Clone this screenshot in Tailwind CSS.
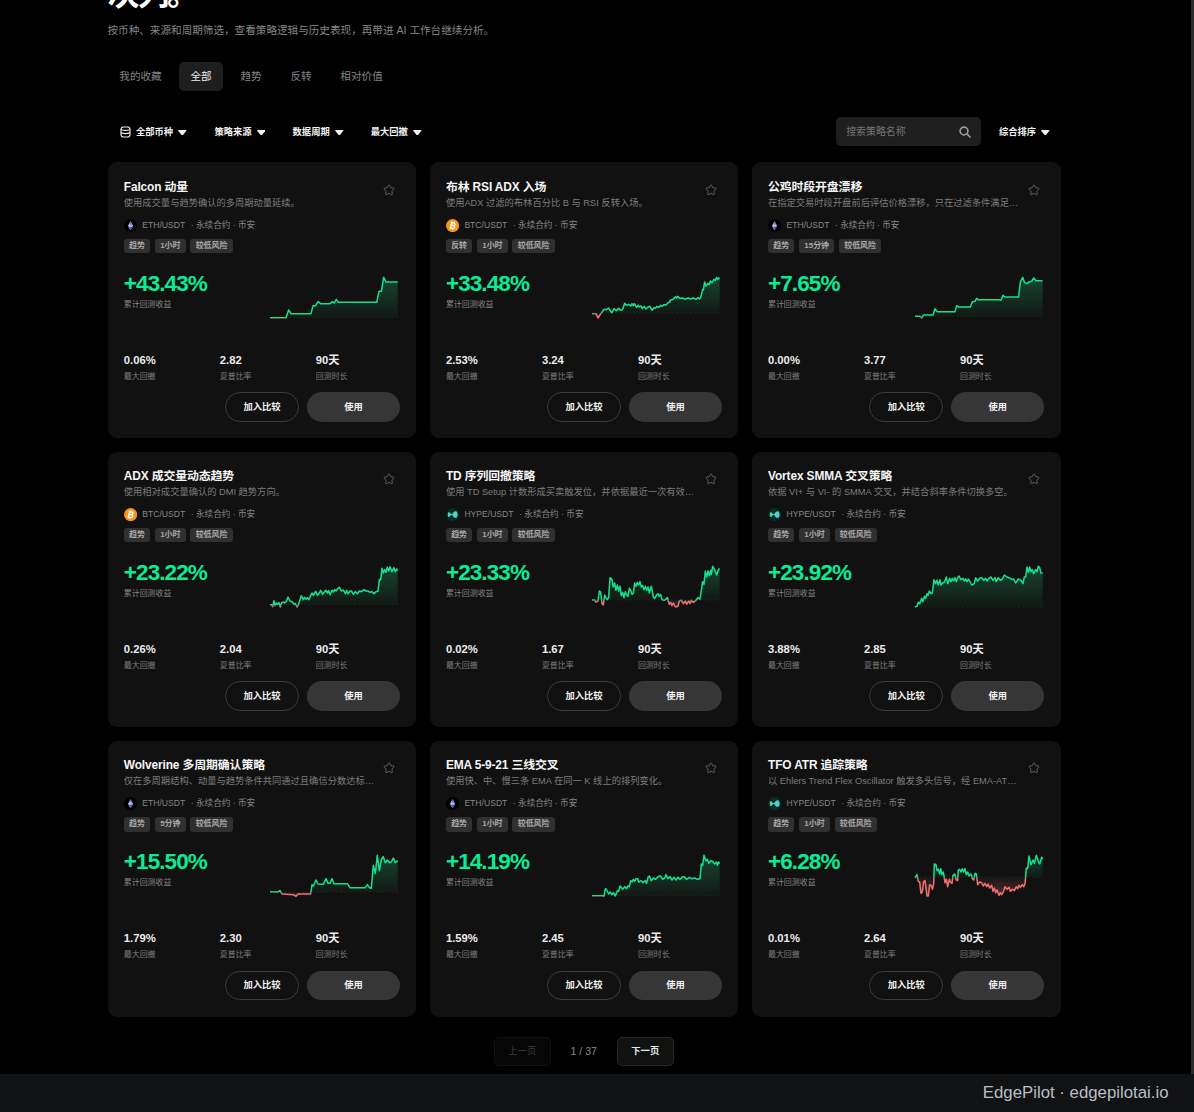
<!DOCTYPE html>
<html lang="zh-CN">
<head>
    <meta charset="UTF-8">
    <meta name="viewport" content="width=device-width, initial-scale=1.0">
    <title>EdgePilot 策略</title>
    <script src="https://cdn.jsdelivr.net/npm/@tailwindcss/browser@4"></script>
</head>
<body class="bg-black text-white font-['Liberation_Sans','Noto_Sans_CJK_SC',sans-serif] h-[1112px] overflow-hidden flex flex-col">
    <div class="flex h-[1074px] overflow-hidden">
        <main class="flex-1 pl-[107.5px] pr-[130.5px]">
            <div class="h-[12px] flex flex-col justify-end">
                <h1 class="text-[32px] leading-[36px] font-bold tracking-[-0.07em]">次列。</h1>
            </div>
            <p class="mt-[9.8px] text-[10.6px] leading-[17px] text-[#858585]">按币种、来源和周期筛选，查看策略逻辑与历史表现，再带进 AI 工作台继续分析。</p>

            <nav class="mt-[23.2px] flex gap-[5.2px] text-[10.6px] leading-[29px] text-[#858585]">
                <button class="px-[11.8px] rounded-[5px]">我的收藏</button>
                <button class="px-[11.8px] rounded-[5px] bg-[#1e1e1e] text-[#f0f0f0]">全部</button>
                <button class="px-[11.8px] rounded-[5px]">趋势</button>
                <button class="px-[11.8px] rounded-[5px]">反转</button>
                <button class="px-[11.8px] rounded-[5px]">相对价值</button>
            </nav>

            <div class="mt-[26.5px] h-[29px] flex items-center text-[9.27px] font-bold text-[#f2f2f2]">
                <button class="pt-px pl-3 w-[95.5px] flex items-center">
                    <svg class="w-[11px] h-[12px] mr-[5.5px]" viewBox="0 0 11 12" fill="none" stroke="currentColor" stroke-width="1.1">
                        <rect x="1" y="1" width="9" height="10" rx="2.4"></rect>
                        <path d="M1 3.2c1 1.6 8 1.6 9 0M1 6.4c1 1.6 8 1.6 9 0"></path>
                    </svg>
                    全部币种
                    <svg class="w-[8.6px] h-[5.4px] ml-[5.3px]" viewBox="0 0 86 54" fill="currentColor"><path d="M8 0h70q10 2 4 11L50 49q-7 7-14 0L4 11Q-2 2 8 0z"></path></svg>
                </button>
                <button class="pt-px pl-[11.5px] w-[78.1px] flex items-center">
                    策略来源
                    <svg class="w-[8.6px] h-[5.4px] ml-[5.3px]" viewBox="0 0 86 54" fill="currentColor"><path d="M8 0h70q10 2 4 11L50 49q-7 7-14 0L4 11Q-2 2 8 0z"></path></svg>
                </button>
                <button class="pt-px pl-[11.5px] w-[78.1px] flex items-center">
                    数据周期
                    <svg class="w-[8.6px] h-[5.4px] ml-[5.3px]" viewBox="0 0 86 54" fill="currentColor"><path d="M8 0h70q10 2 4 11L50 49q-7 7-14 0L4 11Q-2 2 8 0z"></path></svg>
                </button>
                <button class="pt-px pl-[11.5px] w-[78.1px] flex items-center">
                    最大回撤
                    <svg class="w-[8.6px] h-[5.4px] ml-[5.3px]" viewBox="0 0 86 54" fill="currentColor"><path d="M8 0h70q10 2 4 11L50 49q-7 7-14 0L4 11Q-2 2 8 0z"></path></svg>
                </button>
                <div class="ml-auto w-[145.6px] h-[29px] rounded-[5px] bg-[#1e1e1e] flex items-center justify-between pl-[10.4px] pr-[10px] text-[9.94px] font-normal text-[#757575]">
                    <span>搜索策略名称</span>
                    <svg class="w-[12px] h-[12px]" viewBox="0 0 12 12" fill="none" stroke="#9a9a9a" stroke-width="1.7" stroke-linecap="round"><circle cx="5" cy="5" r="3.9"></circle><path d="M8 8l3 3"></path></svg>
                </div>
                <button class="pt-px pl-[17.7px] pr-[10.5px] flex items-center">
                    综合排序
                    <svg class="w-[8.6px] h-[5.4px] ml-[5.3px]" viewBox="0 0 86 54" fill="currentColor"><path d="M8 0h70q10 2 4 11L50 49q-7 7-14 0L4 11Q-2 2 8 0z"></path></svg>
                </button>
            </div>

            <div id="cards" class="mt-[15.9px] grid grid-cols-3 gap-x-[13.3px] gap-y-[13.4px]"></div>

            <div class="mt-[20.8px] flex justify-center items-center text-[9.27px] font-bold pr-[0.5px]">
                <button class="w-[57px] h-[28.5px] rounded-[5px] border border-[#101110] bg-[#060606] text-[#3c3c3c] font-normal">上一页</button>
                <span class="w-[66px] text-center text-[10.6px] font-normal text-[#8a8a8a]">1 / 37</span>
                <button class="w-[57px] h-[28.5px] rounded-[5px] border border-[#252a26] bg-[#101210] text-[#e8e8e8]">下一页</button>
            </div>
        </main>
        <div class="w-[3px] bg-[#2c2c2c]"></div>
    </div>
    <footer class="h-[38px] bg-[#111214] flex items-center justify-end pr-[25.5px] text-[16.8px] text-[#b9bfc6]">EdgePilot · edgepilotai.io</footer>

    <script>
        const coinIcons = {
            ETH: `<svg class="w-[13.2px] h-[13.2px]" viewBox="0 0 40 40"><circle cx="20" cy="20" r="20" fill="#000"></circle><path d="M20 6L12 21l8 5z" fill="#9cc4f5"></path><path d="M20 6l8 15-8 5z" fill="#8f88f0"></path><path d="M12 22.5l8 11.5v-7z" fill="#b79cf5"></path><path d="M28 22.5l-8 11.5v-7z" fill="#6e69d0"></path><path d="M20 16l-8 5 8 5 8-5z" fill="#d5deff" opacity=".5"></path></svg>`,
            BTC: `<svg class="w-[13.2px] h-[13.2px]" viewBox="0 0 40 40"><circle cx="20" cy="20" r="20" fill="#f7931a"></circle><g transform="rotate(14 20 20)" fill="none" stroke="#fff" stroke-width="4"><path d="M12 11.5h10.5a4 4 0 0 1 0 8H15.5M22.5 19.5a4.5 4.5 0 0 1 0 9H12M15.5 11.5v17"></path><path d="M17.5 7.5v4M22 7.5v4M17.5 28.5v4M22 28.5v4" stroke-width="2.6"></path></g></svg>`,
            HYPE: `<svg class="w-[13.2px] h-[13.2px]" viewBox="0 0 40 40"><circle cx="20" cy="20" r="20" fill="#072b26"></circle><path d="M6.5 13.500c3-1.500 5.500 1 7.500 4 1.500 1.500 4.500 1.500 6 0 2-4.500 6-8.500 12-7 4.500 4.500 4.500 14.500 0 19-6 1.500-10-2.500-12-7-1.500-1.500-4.500-1.500-6 0-2 3-4.500 5.500-7.500 4-1.500-3-1.500-10 0-13z" fill="#50d2c1"></path></svg>`
        };

        // points live on a 384x130 grid, base is the zero-return line
        const strategies = [
            { name: 'Falcon 动量', desc: '使用成交量与趋势确认的多周期动量延续。', coin: 'ETH', tags: ['趋势', '1小时'], ret: '+43.43%', dd: '0.06%', sharpe: '2.82', base: 125,
              points: '0,125 48,125 56,102 63,113 123,113 129,89 137,89 144,77 152,83 180,83 187,77 193,81 199,70 205,79 320,79 327,46 334,46 341,4 348,18 383,18' },
            { name: '布林 RSI ADX 入场', desc: '使用ADX 过滤的布林百分比 B 与 RSI 反转入场。', coin: 'BTC', tags: ['反转', '1小时'], ret: '+33.48%', dd: '2.53%', sharpe: '3.24', base: 111,
              points: '0,113 12,113 18,126 25,115 36,100 43,101 50,96 56,106 60,110 66,98 73,104 80,97 86,103 92,100 98,82 104,88 110,85 116,90 120,83 124,89 127,83 134,94 138,88 142,93 147,90 151,98 156,91 162,99 168,93 174,91 180,103 186,95 190,97 195,91 200,94 206,88 210,91 216,86 222,87 228,80 232,79 236,72 244,70 250,62 254,66 257,61 264,67 272,66 280,70 288,66 296,69 304,66 312,70 318,65 322,69 326,65 332,40 334,42 338,18 342,30 348,22 352,26 355,15 360,20 366,10 370,13 374,4 377,10 380,6 383,8' },
            { name: '公鸡时段开盘漂移', desc: '在指定交易时段开盘前后评估价格漂移，只在过滤条件满足时触发。', coin: 'ETH', tags: ['趋势', '15分钟'], ret: '+7.65%', dd: '0.00%', sharpe: '3.77', base: 121,
              points: '0,121 14,121 20,126 26,117 54,117 60,98 66,107 120,107 125,89 131,93 166,93 172,77 180,76 185,67 190,71 250,71 258,73 264,58 270,63 311,63 316,18 323,4 329,20 336,23 343,17 350,16 356,6 363,14 383,14' },
            { name: 'ADX 成交量动态趋势', desc: '使用相对成交量确认的 DMI 趋势方向。', coin: 'BTC', tags: ['趋势', '1小时'], ret: '+23.22%', dd: '0.26%', sharpe: '2.04', base: 119,
              points: '0,119 5,119 8,125 12,107 15,122 19,114 23,118 27,113 31,126 35,113 40,111 44,114 50,107 54,96 60,108 66,110 72,118 76,116 81,126 86,118 88,110 94,92 100,104 104,97 108,103 112,98 117,104 121,94 126,84 130,91 134,84 137,79 143,91 148,84 152,76 158,88 164,80 168,76 172,84 176,77 180,89 186,76 190,81 194,74 198,78 203,71 208,67 214,78 220,75 226,86 230,76 234,86 240,78 244,78 250,88 256,80 262,86 268,78 274,80 282,74 288,78 294,78 300,82 306,80 312,86 318,80 324,78 328,44 332,44 336,10 340,24 344,14 348,22 352,6 356,18 360,5 366,20 372,8 376,20 380,12 383,17' },
            { name: 'TD 序列回撤策略', desc: '使用 TD Setup 计数形成买卖触发位，并依据最近一次有效信号执行。', coin: 'HYPE', tags: ['趋势', '1小时'], ret: '+23.33%', dd: '0.02%', sharpe: '1.67', base: 105,
              points: '0,105 8,105 12,111 18,108 22,78 26,82 30,116 34,120 38,90 42,98 46,104 50,98 54,38 60,44 64,66 68,54 72,76 76,60 80,78 84,64 88,92 92,82 96,98 100,80 104,90 108,94 112,70 116,76 120,88 124,84 128,54 132,64 136,52 140,60 144,50 148,66 152,62 156,74 160,64 164,76 168,66 172,84 178,64 184,96 188,100 194,90 198,86 202,94 206,88 210,104 218,106 226,98 232,118 236,112 240,122 244,114 250,126 258,124 262,108 268,106 274,116 280,108 284,118 290,108 294,116 298,106 304,112 312,106 318,98 324,102 328,76 332,50 336,58 340,18 344,36 348,18 352,32 356,16 358,28 362,4 368,14 374,30 380,12 383,13' },
            { name: 'Vortex SMMA 交叉策略', desc: '依据 VI+ 与 VI- 的 SMMA 交叉，并结合斜率条件切换多空。', coin: 'HYPE', tags: ['趋势', '1小时'], ret: '+23.92%', dd: '3.88%', sharpe: '2.85', base: 126,
              points: '0,126 6,124 10,112 14,116 20,100 24,110 28,94 32,100 36,86 39,91 43,78 48,86 52,84 57,44 62,56 66,46 70,60 75,44 78,60 83,54 88,52 94,36 98,56 104,40 108,50 112,40 116,48 120,38 124,50 128,38 132,33 138,44 144,40 148,48 152,42 156,50 160,42 164,48 170,60 178,56 182,38 188,48 194,40 200,38 206,46 212,40 216,48 222,40 228,36 234,46 240,38 244,50 250,38 256,46 262,42 268,30 276,36 286,40 292,44 296,42 302,54 310,42 318,46 324,56 328,36 332,36 336,6 340,22 344,6 348,20 352,14 356,26 362,14 366,20 370,4 374,8 378,24 383,24' },
            { name: 'Wolverine 多周期确认策略', desc: '仅在多周期结构、动量与趋势条件共同通过且确信分数达标时入场。', coin: 'ETH', tags: ['趋势', '5分钟'], ret: '+15.50%', dd: '1.79%', sharpe: '2.30', base: 114,
              points: '0,113 24,114 30,110 36,120 70,122 78,127 84,120 122,120 126,92 130,96 138,78 144,90 160,91 168,74 174,88 180,88 186,74 192,89 232,89 240,101 286,101 292,92 298,101 304,103 308,56 310,34 316,58 322,4 328,50 334,16 340,8 346,26 352,18 358,26 364,24 370,12 376,26 383,20' },
            { name: 'EMA 5-9-21 三线交叉', desc: '使用快、中、慢三条 EMA 在同一 K 线上的排列变化。', coin: 'ETH', tags: ['趋势', '1小时'], ret: '+14.19%', dd: '1.59%', sharpe: '2.45', base: 125,
              points: '0,125 30,125 36,127 40,104 44,108 50,120 54,114 60,122 64,116 70,126 76,110 80,112 84,96 92,106 98,98 104,104 108,96 112,98 116,80 120,84 124,76 128,82 132,74 137,74 140,84 148,80 153,86 160,80 164,88 168,70 172,66 178,80 184,72 190,76 196,70 202,66 206,66 212,76 218,72 222,62 228,74 234,68 240,78 246,70 252,78 258,70 264,76 272,68 276,68 284,76 292,70 300,74 308,72 316,76 324,74 328,30 332,34 336,4 342,20 346,16 350,28 356,20 362,22 368,30 374,24 376,34 380,24 383,29' },
            { name: 'TFO ATR 追踪策略', desc: '以 Ehlers Trend Flex Oscillator 触发多头信号，经 EMA-ATR 追踪止损退出。', coin: 'HYPE', tags: ['趋势', '1小时'], ret: '+6.28%', dd: '0.01%', sharpe: '2.64', base: 69,
              points: '0,72 6,62 10,82 14,84 18,118 22,114 26,82 30,80 36,126 40,126 44,92 48,94 52,106 56,90 58,30 63,32 66,50 70,46 74,60 77,44 81,62 85,54 90,86 94,76 98,98 103,76 106,84 111,88 114,64 119,60 124,78 128,80 130,48 134,46 138,54 142,44 146,54 150,44 154,62 158,54 162,66 168,60 172,74 176,78 180,58 184,60 188,92 194,84 200,86 205,96 210,88 215,98 219,90 224,102 230,94 234,112 238,102 242,116 246,108 252,124 256,116 260,122 266,112 270,98 276,106 282,100 286,112 292,106 298,110 304,98 308,104 312,94 316,100 322,92 326,98 330,90 334,42 338,44 342,6 348,32 354,18 358,28 364,4 370,22 374,30 380,10 383,14' }
        ];

        function sparkline(s, i) {
            const area = `0,${s.base} ${s.points} 383,${s.base}`;
            return `
                <svg class="w-[128px] h-[44px] mr-[1.7px] overflow-visible" viewBox="0 0 384 132" fill="none" stroke-width="4.6" stroke-linejoin="round">
                    <defs>
                        <clipPath id="up${i}"><rect x="-4" y="-4" width="392" height="${s.base + 6.5}"></rect></clipPath>
                        <clipPath id="down${i}"><rect x="-4" y="${s.base + 2.5}" width="392" height="100"></rect></clipPath>
                        <linearGradient id="gu${i}" gradientUnits="userSpaceOnUse" x1="0" y1="0" x2="0" y2="${s.base}"><stop stop-color="#26c77c" stop-opacity=".3"></stop><stop offset="1" stop-color="#26c77c" stop-opacity=".04"></stop></linearGradient>
                        <linearGradient id="gd${i}" gradientUnits="userSpaceOnUse" x1="0" y1="${s.base}" x2="0" y2="130"><stop stop-color="#f87171" stop-opacity=".04"></stop><stop offset="1" stop-color="#f87171" stop-opacity=".3"></stop></linearGradient>
                    </defs>
                    <path d="M0 ${s.base}H383" stroke="#262b28" stroke-width="2" stroke-dasharray="7 7"></path>
                    <g clip-path="url(#up${i})"><polygon points="${area}" fill="url(#gu${i})"></polygon><polyline points="${s.points}" stroke="#14e08e"></polyline></g>
                    <g clip-path="url(#down${i})"><polygon points="${area}" fill="url(#gd${i})"></polygon><polyline points="${s.points}" stroke="#f07070"></polyline></g>
                </svg>`;
        }

        document.getElementById('cards').innerHTML = strategies.map((s, i) => `
            <article class="h-[275.8px] min-w-0 rounded-[9px] bg-[#111111] px-[16.3px] pt-[16.6px] flex flex-col">
                <div class="flex justify-between">
                    <div class="min-w-0 w-[251px]">
                        <h2 class="text-[11.9px] leading-[16px] font-bold tracking-[-0.01em] text-[#f5f5f5] whitespace-nowrap">${s.name}</h2>
                        <p class="text-[9.27px] leading-[17px] text-[#7d7d7d] truncate">${s.desc}</p>
                    </div>
                    <svg class="w-[12px] h-[12px] mt-[4.9px] mr-[4.7px] shrink-0" viewBox="0 0 24 24" fill="none" stroke="#6a6a6a" stroke-width="1.7" stroke-linejoin="round"><path d="M10.8 2.5q1.2-1.4 2.4 0l2.3 4.9 5.6.9q1.7.5.7 1.9l-4 4.2.9 5.8q-.2 1.7-1.7 1.100L12 18.700l-5 2.600q-1.500.6-1.700-1.100l.9-5.800-4-4.200q-1-1.400.7-1.900l5.600-.9z"></path></svg>
                </div>
                <div class="mt-[6.8px] h-[13.2px] flex items-center text-[8.6px] text-[#858585]">
                    ${coinIcons[s.coin]}
                    <span class="ml-[5.3px]">${s.coin}/USDT</span>
                    <span class="ml-[5.5px]">· 永续合约 · 币安</span>
                </div>
                <div class="mt-[6.9px] flex gap-[4.6px] text-[7.95px] leading-[14.4px] font-bold text-[#a8a8a8]">
                    ${[...s.tags, '较低风险'].map(t => `<span class="px-[5.3px] rounded-[3px] bg-[#303030]">${t}</span>`).join('')}
                </div>
                <div class="mt-[17.3px] h-[64px] flex justify-between">
                    <div>
                        <div class="text-[22.5px] leading-[25px] font-bold tracking-[-0.04em] text-[#0beb96]">${s.ret}</div>
                        <div class="mt-[3.3px] text-[7.95px] leading-[12px] text-[#858585]">累计回测收益</div>
                    </div>
                    <div class="mt-[5.4px]">${sparkline(s, i)}</div>
                </div>
                <div class="mt-[17.2px] grid grid-cols-3 gap-[11.8px]">
                    <div><div class="text-[11.26px] leading-[17px] font-bold text-[#ececec]">${s.dd}</div><div class="text-[7.95px] leading-[16px] text-[#7d7d7d]">最大回撤</div></div>
                    <div><div class="text-[11.26px] leading-[17px] font-bold text-[#ececec]">${s.sharpe}</div><div class="text-[7.95px] leading-[16px] text-[#7d7d7d]">夏普比率</div></div>
                    <div><div class="text-[11.26px] leading-[17px] font-bold text-[#ececec]">90天</div><div class="text-[7.95px] leading-[16px] text-[#7d7d7d]">回测时长</div></div>
                </div>
                <div class="mt-auto mb-[16.3px] flex justify-end gap-2 text-[9.27px] font-bold text-[#f0f0f0]">
                    <button class="w-[74px] h-[29.7px] pt-px rounded-full border border-[#3c3c3c]">加入比较</button>
                    <button class="w-[93px] h-[29.7px] pt-px rounded-full bg-[#363636]">使用</button>
                </div>
            </article>`).join('');
    </script>
</body>
</html>
